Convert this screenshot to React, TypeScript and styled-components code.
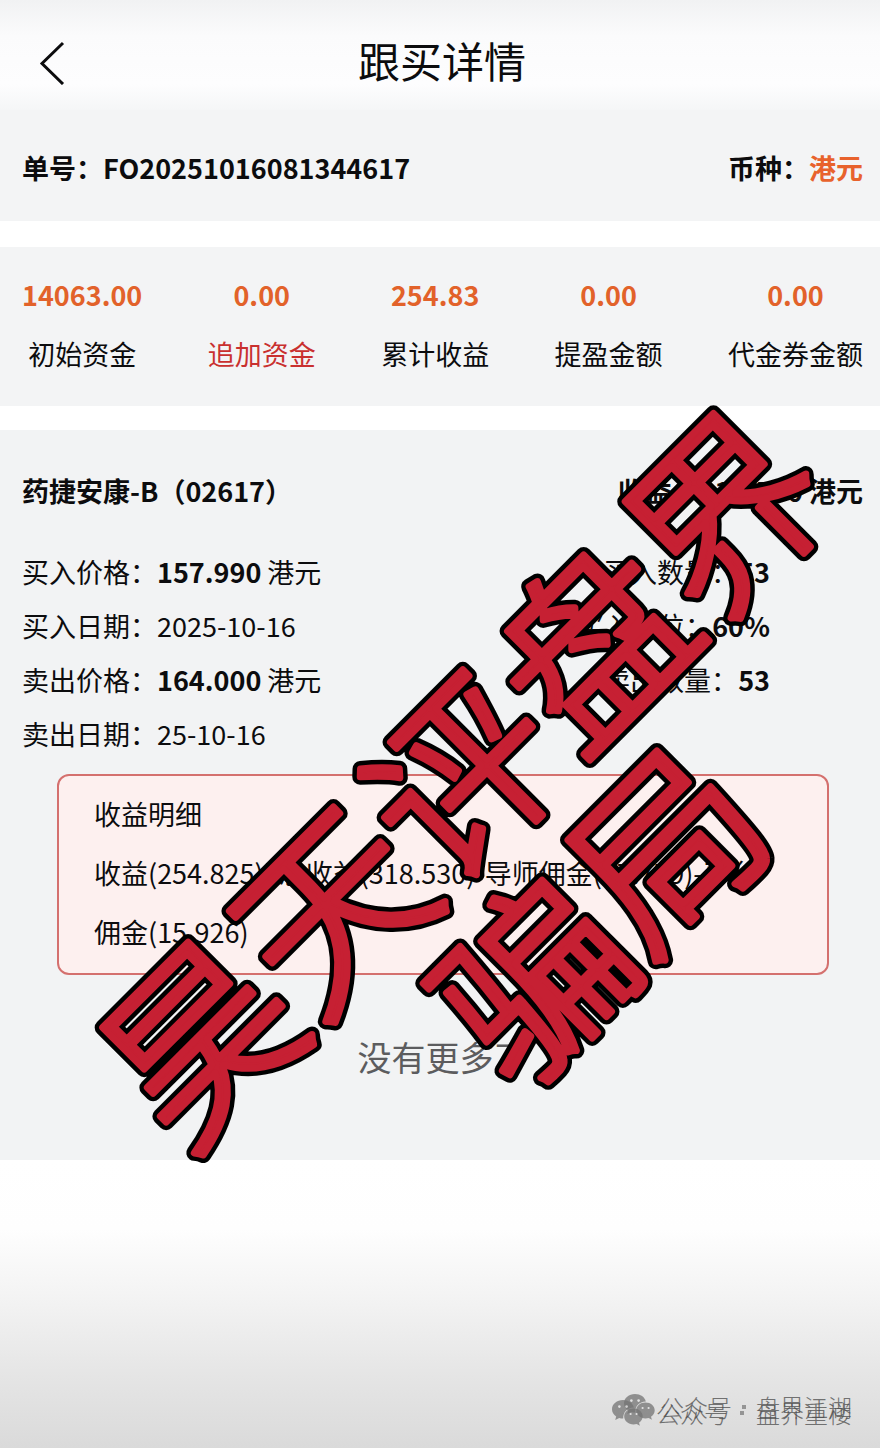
import React from "react";
import styled, { createGlobalStyle } from "styled-components";

const GlobalStyle = createGlobalStyle`
  *, *::before, *::after { box-sizing: border-box; }
  body {
    margin: 0;
    background: #ffffff;
    color: #0c0c0e;
    font-family: "Noto Sans CJK SC", sans-serif;
    font-size: 27px;
    line-height: 40px;
  }
`;

const Page = styled.div`
  position: relative;
  display: flex;
  flex-direction: column;
  min-height: 100vh;
  overflow: hidden;
`;

const Header = styled.header`
  display: grid;
  grid-template-columns: 104px 1fr 100px;
  align-items: center;
  padding: 33px 0 17px;
  background: linear-gradient(#f1f2f3 0, #fbfbfc 36px, #fdfdfe 84px, #f5f6f7 110px);
`;

const BackButton = styled.button`
  justify-self: start;
  display: flex;
  padding: 8px 36px;
  border: 0;
  background: none;
  color: inherit;
  cursor: pointer;
`;

const Title = styled.h1`
  margin: 0;
  padding-bottom: 6px;
  font-size: 42px;
  font-weight: 400;
  line-height: 54px;
  text-align: center;
`;

const Band = styled.section`
  padding: 0 17px 0 22px;
  background: #f3f4f5;
`;

const OrderBand = styled(Band)`
  display: flex;
  justify-content: space-between;
  padding-top: 38px;
  padding-bottom: 33px;
  margin-bottom: 26px;
  font-weight: 700;
`;

const Accent = styled.span`
  color: #e8622c;
`;

const StatsBand = styled(Band)`
  padding-top: 28px;
  padding-bottom: 32px;
  margin-bottom: 24px;
`;

const Stats = styled.dl`
  display: flex;
  justify-content: space-between;
  margin: 0;
`;

const Stat = styled.div`
  display: flex;
  flex-direction: column-reverse;
  gap: 19px;
  text-align: center;
`;

const StatLabel = styled.dt<{ $alert?: boolean }>`
  color: ${(p) => (p.$alert ? "#c9302f" : "inherit")};
`;

const StatValue = styled.dd`
  margin: 0;
  color: #e2622a;
  font-weight: 700;
`;

const DetailBand = styled(Band)`
  position: relative;
  z-index: 1;
  padding-top: 34px;
  padding-bottom: 76px;
  background: #f2f3f4;
  line-height: 54px;
`;

const StockRow = styled.div`
  display: flex;
  justify-content: space-between;
  margin-bottom: 27px;
  font-weight: 700;
`;

const StockName = styled.h2`
  margin: 0;
  font-size: 27px;
`;

const Unit = styled.span`
  margin-left: 6px;
`;

const Trade = styled.div`
  display: flex;
  justify-content: space-between;
  padding-right: 93px;
`;

const Facts = styled.dl<{ $end?: boolean }>`
  display: flex;
  flex-direction: column;
  align-items: ${(p) => (p.$end ? "flex-end" : "flex-start")};
  margin: 0;
`;

const Fact = styled.div`
  display: flex;
`;

const FactValue = styled.dd`
  margin: 0;
`;

const Breakdown = styled.div`
  margin: 13px 34px 0 35px;
  padding: 8px 35px 12px;
  border: 2px solid #d4706e;
  border-radius: 12px;
  background: #fdf0ef;
  line-height: 59px;

  p { margin: 0; white-space: nowrap; }
`;

const NoMore = styled.p`
  margin: 55px 0 0;
  color: #5c5c5e;
  font-size: 34px;
  text-align: center;
`;

const Stamp = styled.svg`
  position: absolute;
  top: 418px;
  left: calc(50% + 94px);
  width: 960px;
  height: 400px;
  overflow: visible;
  transform: translate(-50%, -50%) rotate(-45deg);
  pointer-events: none;

  text {
    font-size: 186px;
    font-weight: 300;
    text-anchor: middle;
    stroke-linejoin: round;
  }
`;

const Footer = styled.footer`
  position: relative;
  flex: 1;
  min-height: 288px;
  background: linear-gradient(#ffffff 0%, #fefefe 24%, #f3f3f3 48%, #e5e5e5 75%, #dadada 100%);
`;

const Watermark = styled.div<{ $bottom: number; $gap: number }>`
  position: absolute;
  right: 28px;
  bottom: ${(p) => p.$bottom}px;
  display: flex;
  align-items: center;
  gap: ${(p) => p.$gap}px;
  color: #4c4c4c;
  font-size: 24px;
  font-weight: 300;
  line-height: 32px;
  opacity: 0.75;
`;

const WatermarkDot = styled.span<{ $space: number }>`
  width: 4px;
  height: 4px;
  margin: 0 ${(p) => p.$space}px;
  background: #7c7c7c;
`;

const WatermarkText = styled.span`
  display: flex;
  align-items: center;
`;

const stats = [
  { label: "初始资金", value: "14063.00" },
  { label: "追加资金", value: "0.00", alert: true },
  { label: "累计收益", value: "254.83" },
  { label: "提盈金额", value: "0.00" },
  { label: "代金券金额", value: "0.00" },
];

const stampLines = [
  { text: "昊天评盘界", y: 169 },
  { text: "骗局", y: 363 },
];

function BubbleIcon() {
  return (
    <svg width="31" height="26" viewBox="0 0 31 26" aria-hidden="true">
      <path
        fill="#747474"
        d="M11 0C5 0 0 4 0 9.200c0 3 1.600 5.500 4.200 7.200L3.200 20l4-2c1.200.4 2.500.6 4 .6C11 12 15 7.800 21.800 7.400 20.800 3 16.400 0 11 0Z"
      />
      <path
        fill="#747474"
        d="M21.500 8.600c-5.200 0-9.300 3.500-9.300 7.900s4.100 7.900 9.300 7.900c1.100 0 2.200-.2 3.200-.5l3.200 1.800-.9-3c2.200-1.500 3.700-3.700 3.700-6.200 0-4.400-4-7.900-9.200-7.900Z"
      />
      <g fill="#e3e3e3">
        <circle cx="7.400" cy="6.600" r="1.300" />
        <circle cx="14.600" cy="6.600" r="1.300" />
        <circle cx="18.600" cy="14" r="1.100" />
        <circle cx="24.600" cy="14" r="1.100" />
      </g>
    </svg>
  );
}

type MarkProps = { name: string; bottom: number; gap: number; space: number };

function Mark({ name, bottom, gap, space }: MarkProps) {
  return (
    <Watermark $bottom={bottom} $gap={gap}>
      <BubbleIcon />
      <WatermarkText>
        公众号
        <WatermarkDot $space={space} />
        {name}
      </WatermarkText>
    </Watermark>
  );
}

export default function App() {
  return (
    <>
      <GlobalStyle />
      <Page>
        <Header>
          <BackButton aria-label="返回">
            <svg width="32" height="44" viewBox="0 0 32 44" fill="none" stroke="currentColor" strokeWidth="3">
              <path d="M27 2 6 22.500 27 43" />
            </svg>
          </BackButton>
          <Title>跟买详情</Title>
        </Header>

        <OrderBand>
          <span>单号：FO20251016081344617</span>
          <span>
            币种：<Accent>港元</Accent>
          </span>
        </OrderBand>

        <StatsBand>
          <Stats>
            {stats.map((s) => (
              <Stat key={s.label}>
                <StatLabel $alert={s.alert}>{s.label}</StatLabel>
                <StatValue>{s.value}</StatValue>
              </Stat>
            ))}
          </Stats>
        </StatsBand>

        <DetailBand>
          <StockRow>
            <StockName>药捷安康-B（02617）</StockName>
            <span>
              收益：318.530<Unit>港元</Unit>
            </span>
          </StockRow>

          <Trade>
            <Facts>
              <Fact>
                <dt>买入价格：</dt>
                <FactValue><b>157.990</b><Unit>港元</Unit></FactValue>
              </Fact>
              <Fact>
                <dt>买入日期：</dt>
                <FactValue>2025-10-16</FactValue>
              </Fact>
              <Fact>
                <dt>卖出价格：</dt>
                <FactValue><b>164.000</b><Unit>港元</Unit></FactValue>
              </Fact>
              <Fact>
                <dt>卖出日期：</dt>
                <FactValue>25-10-16</FactValue>
              </Fact>
            </Facts>
            <Facts $end>
              <Fact>
                <dt>买入数量：</dt>
                <FactValue><b>53</b></FactValue>
              </Fact>
              <Fact>
                <dt>买入仓位：</dt>
                <FactValue><b>60%</b></FactValue>
              </Fact>
              <Fact>
                <dt>卖出数量：</dt>
                <FactValue><b>53</b></FactValue>
              </Fact>
            </Facts>
          </Trade>

          <Breakdown>
            <p>收益明细</p>
            <p>
              收益(254.825)=总收益(318.530)-导师佣金(47.779)-平台
              <br />
              佣金(15.926)
            </p>
          </Breakdown>

          <NoMore>没有更多了</NoMore>

          <Stamp viewBox="0 0 960 400">
            {stampLines.map((line) => (
              <g key={line.text}>
                <text x="480" y={line.y} fill="#000000" stroke="#000000" strokeWidth="16">
                  {line.text}
                </text>
                <text x="480" y={line.y} fill="#c62033" stroke="#c62033" strokeWidth="7" aria-hidden="true">
                  {line.text}
                </text>
              </g>
            ))}
          </Stamp>
        </DetailBand>

        <Footer>
          <Mark name="盘界江湖" bottom={25} gap={5} space={10} />
          <Mark name="盘界重楼" bottom={19} gap={13} space={12} />
        </Footer>
      </Page>
    </>
  );
}
